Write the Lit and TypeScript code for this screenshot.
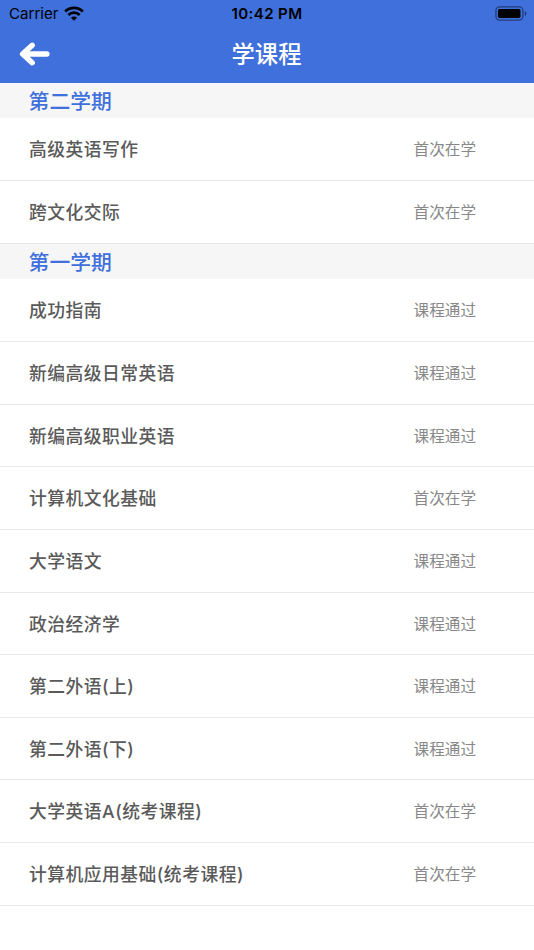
import { LitElement, html, css } from "lit";
import { customElement, property } from "lit/decorators.js";

interface Course {
  name: string;
  status: string;
}

interface Term {
  title: string;
  courses: Course[];
}

const STUDYING = "首次在学";
const PASSED = "课程通过";

const TERMS: Term[] = [
  {
    title: "第二学期",
    courses: [
      { name: "高级英语写作", status: STUDYING },
      { name: "跨文化交际", status: STUDYING },
    ],
  },
  {
    title: "第一学期",
    courses: [
      { name: "成功指南", status: PASSED },
      { name: "新编高级日常英语", status: PASSED },
      { name: "新编高级职业英语", status: PASSED },
      { name: "计算机文化基础", status: STUDYING },
      { name: "大学语文", status: PASSED },
      { name: "政治经济学", status: PASSED },
      { name: "第二外语(上)", status: PASSED },
      { name: "第二外语(下)", status: PASSED },
      { name: "大学英语A(统考课程)", status: STUDYING },
      { name: "计算机应用基础(统考课程)", status: STUDYING },
    ],
  },
];

@customElement("status-bar")
export class StatusBar extends LitElement {
  static styles = css`
    :host {
      display: grid;
      grid-template-columns: 1fr auto 1fr;
      align-items: center;
      height: 27px;
      padding: 0 7px 0 9px;
      box-sizing: border-box;
      color: #000;
      font: 15.1px/27px Inter, sans-serif;
    }
    svg {
      display: block;
    }
    .carrier {
      display: flex;
      align-items: center;
      gap: 5.5px;
    }
    .carrier svg {
      margin-bottom: 1px;
    }
    .time {
      margin-left: -2px;
      font-size: 15.1px;
      font-weight: 600;
      letter-spacing: 0.35px;
    }
    .battery {
      justify-self: end;
    }
  `;

  render() {
    return html`
      <div class="carrier">
        <span>Carrier</span>
        <svg width="20" height="15" viewBox="0 0 20 15">
          <g fill="none" stroke="#000" stroke-width="2.8">
            <path d="M1.2 5.5a12.4 12.4 0 0 1 17.6 0" />
            <path d="M4.4 9a7.9 7.9 0 0 1 11.2 0" />
          </g>
          <path d="M10 14.7 6.9 11.7a4.4 4.4 0 0 1 6.2 0Z" />
        </svg>
      </div>
      <span class="time">10:42 PM</span>
      <svg class="battery" width="32" height="15" viewBox="0 0 32 15">
        <rect x="0.9" y="0.9" width="27" height="13.2" rx="3.8" fill="none" stroke="#000" stroke-opacity=".45" stroke-width="1.3" />
        <rect x="2.9" y="2.9" width="22.6" height="9.2" rx="1.8" />
        <path d="M29.7 5.2c2.2.7 2.2 3.9 0 4.6Z" fill-opacity=".5" />
      </svg>
    `;
  }
}

@customElement("nav-header")
export class NavHeader extends LitElement {
  @property() heading = "";

  static styles = css`
    :host {
      display: grid;
      grid-template-columns: 1fr auto 1fr;
      align-items: center;
      height: 55.6px;
      padding: 0 20px 2px 19px;
      box-sizing: border-box;
      color: #fff;
    }
    .back {
      display: block;
    }
    .heading {
      font-size: 23.3px;
      font-weight: 500;
      line-height: 53px;
    }
  `;

  render() {
    return html`
      <svg class="back" width="32" height="24" viewBox="0 0 32 24">
        <path d="M13.2 3.3 3.6 12l9.6 8.7M5 12h22.9" fill="none" stroke="#fff" stroke-width="5.4" stroke-linecap="round" stroke-linejoin="round" />
      </svg>
      <span class="heading">${this.heading}</span>
    `;
  }
}

@customElement("term-section")
export class TermSection extends LitElement {
  @property({ attribute: false }) term!: Term;

  static styles = css`
    :host {
      display: block;
    }
    .title {
      height: 35.8px;
      padding-left: 28.6px;
      background: #f6f6f6;
      color: #3f70dc;
      font-size: 20.8px;
      font-weight: 500;
      line-height: 35px;
    }
    .row {
      display: grid;
      grid-template-columns: 1fr 120.4px;
      align-items: center;
      height: 62.63px;
      padding: 0 0 1.7px 29px;
      box-sizing: border-box;
      border-bottom: 1px solid #e9e9e9;
    }
    .name {
      color: #5a5a5a;
      font-family: Inter, "Noto Sans CJK SC", sans-serif;
      font-size: 17.8px;
      font-weight: 500;
      letter-spacing: 0.48px;
    }
    .status {
      color: #888;
      font-size: 15.6px;
    }
  `;

  render() {
    return html`
      <div class="title">${this.term.title}</div>
      ${this.term.courses.map(
        (course) => html`
          <div class="row">
            <span class="name">${course.name}</span>
            <span class="status">${course.status}</span>
          </div>
        `
      )}
    `;
  }
}

@customElement("app-root")
export class AppRoot extends LitElement {
  static styles = css`
    :host {
      display: block;
      min-height: 100vh;
      background: #fff;
      font-family: "Noto Sans CJK SC", "Noto Sans", sans-serif;
    }
    .top {
      background: #3f70dc;
    }
  `;

  render() {
    return html`
      <header class="top">
        <status-bar></status-bar>
        <nav-header heading="学课程"></nav-header>
      </header>
      <main>
        ${TERMS.map((term) => html`<term-section .term=${term}></term-section>`)}
      </main>
    `;
  }
}
